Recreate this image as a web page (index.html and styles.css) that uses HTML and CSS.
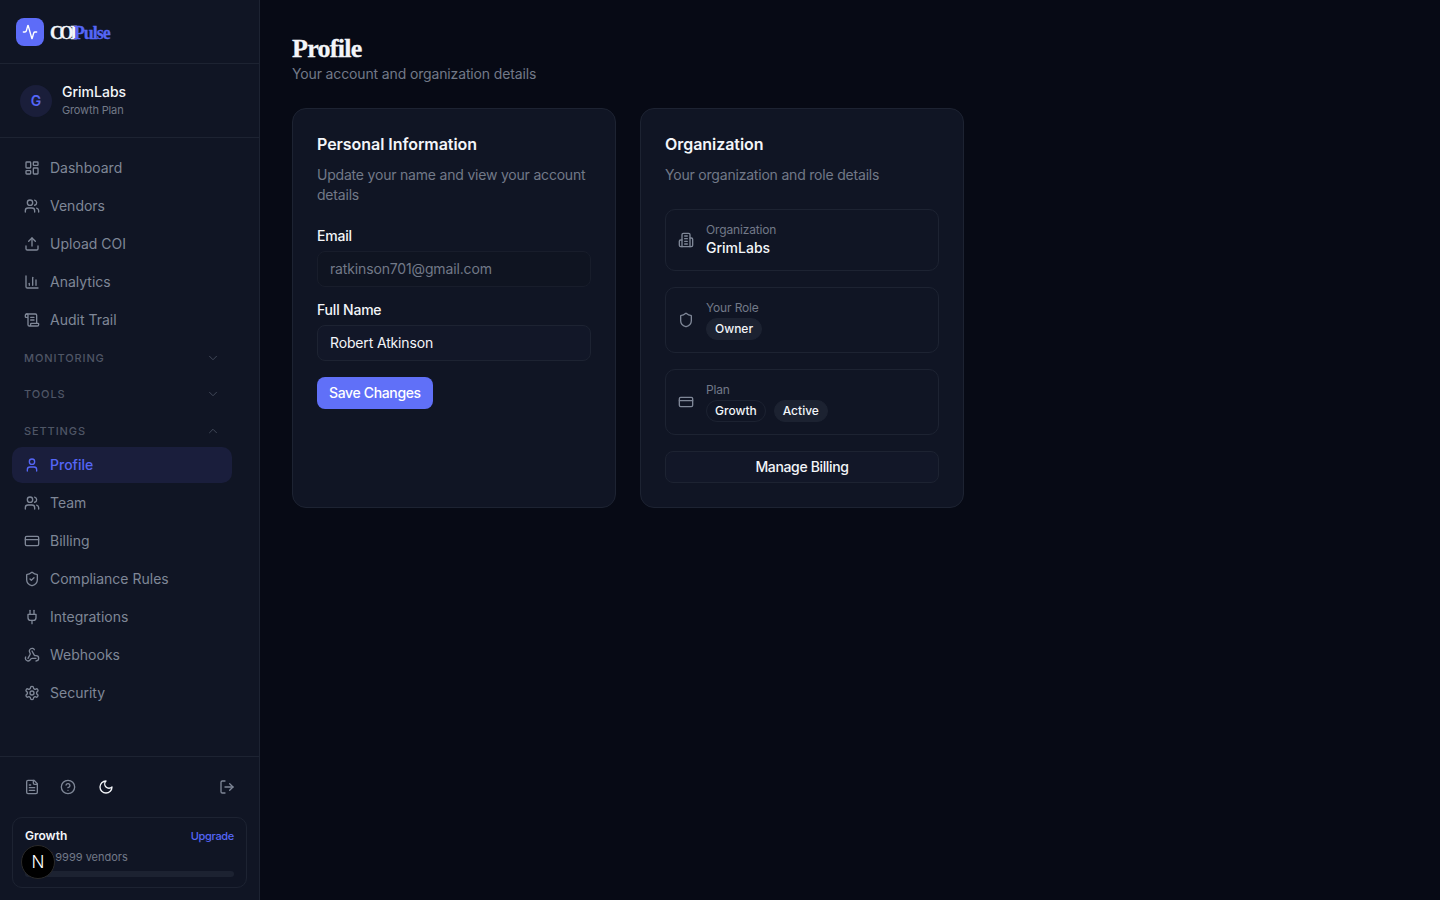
FILE: index.html
```html
<!DOCTYPE html>
<html lang="en">
<head>
    <meta charset="UTF-8">
    <meta name="viewport" content="width=device-width, initial-scale=1.0">
    <title>Profile - COIPulse</title>
    <link rel="stylesheet" href="styles.css">
</head>
<body>
    <svg class="sprite" width="0" height="0">
        <symbol id="i-users" viewBox="0 0 24 24"><path d="M16 21v-2a4 4 0 0 0-4-4H6a4 4 0 0 0-4 4v2"/><circle cx="9" cy="7" r="4"/><path d="M22 21v-2a4 4 0 0 0-3-3.87"/><path d="M16 3.13a4 4 0 0 1 0 7.75"/></symbol>
        <symbol id="i-card" viewBox="0 0 24 24"><rect x="2" y="5" width="20" height="14" rx="2"/><line x1="2" y1="10" x2="22" y2="10"/></symbol>
        <symbol id="i-down" viewBox="0 0 24 24"><path d="m6 9 6 6 6-6"/></symbol>
    </svg>

    <div class="app">
        <aside class="sidebar">
            <div class="logo-row">
                <div class="logo-mark">
                    <svg class="icon" viewBox="0 0 24 24"><path d="M22 12h-2.48a2 2 0 0 0-1.93 1.46l-2.35 8.36a.25.25 0 0 1-.48 0L9.24 2.18a.25.25 0 0 0-.48 0l-2.35 8.36A2 2 0 0 1 4.49 12H2"/></svg>
                </div>
                <span class="logo-text"><span class="logo-coi">COI</span><span class="accent">Pulse</span></span>
            </div>

            <div class="org-row">
                <div class="avatar">G</div>
                <div class="org-text">
                    <div class="org-name">GrimLabs</div>
                    <div class="org-plan">Growth Plan</div>
                </div>
            </div>

            <nav class="nav">
                <a class="nav-item"><svg class="icon" viewBox="0 0 24 24"><rect x="3" y="3" width="7" height="9" rx="1"/><rect x="14" y="3" width="7" height="5" rx="1"/><rect x="14" y="12" width="7" height="9" rx="1"/><rect x="3" y="16" width="7" height="5" rx="1"/></svg><span>Dashboard</span></a>
                <a class="nav-item"><svg class="icon"><use href="#i-users"/></svg><span>Vendors</span></a>
                <a class="nav-item"><svg class="icon" viewBox="0 0 24 24"><path d="M21 15v4a2 2 0 0 1-2 2H5a2 2 0 0 1-2-2v-4"/><polyline points="17 8 12 3 7 8"/><line x1="12" y1="3" x2="12" y2="15"/></svg><span>Upload COI</span></a>
                <a class="nav-item"><svg class="icon" viewBox="0 0 24 24"><path d="M3 3v16a2 2 0 0 0 2 2h16"/><path d="M18 17V9"/><path d="M13 17V5"/><path d="M8 17v-3"/></svg><span>Analytics</span></a>
                <a class="nav-item"><svg class="icon" viewBox="0 0 24 24"><path d="M15 12h-5"/><path d="M15 8h-5"/><path d="M19 17V5a2 2 0 0 0-2-2H4"/><path d="M8 21h12a2 2 0 0 0 2-2v-1a1 1 0 0 0-1-1H11a1 1 0 0 0-1 1v1a2 2 0 1 1-4 0V5a2 2 0 1 0-4 0v2a1 1 0 0 0 1 1h3"/></svg><span>Audit Trail</span></a>

                <div class="nav-section">MONITORING<svg class="chev"><use href="#i-down"/></svg></div>
                <div class="nav-section">TOOLS<svg class="chev"><use href="#i-down"/></svg></div>
                <div class="nav-section open">SETTINGS<svg class="chev flip"><use href="#i-down"/></svg></div>

                <a class="nav-item active"><svg class="icon" viewBox="0 0 24 24"><path d="M19 21v-2a4 4 0 0 0-4-4H9a4 4 0 0 0-4 4v2"/><circle cx="12" cy="7" r="4"/></svg><span>Profile</span></a>
                <a class="nav-item"><svg class="icon"><use href="#i-users"/></svg><span>Team</span></a>
                <a class="nav-item"><svg class="icon"><use href="#i-card"/></svg><span>Billing</span></a>
                <a class="nav-item"><svg class="icon" viewBox="0 0 24 24"><path d="M20 13c0 5-3.5 7.5-7.66 8.95a1 1 0 0 1-.67-.01C7.5 20.5 4 18 4 13V6a1 1 0 0 1 1-1c2 0 4.5-1.2 6.24-2.72a1.17 1.17 0 0 1 1.52 0C14.51 3.81 17 5 19 5a1 1 0 0 1 1 1z"/><path d="m9 12 2 2 4-4"/></svg><span>Compliance Rules</span></a>
                <a class="nav-item"><svg class="icon" viewBox="0 0 24 24"><path d="M12 22v-5"/><path d="M9 8V2"/><path d="M15 8V2"/><path d="M18 8v5a4 4 0 0 1-4 4h-4a4 4 0 0 1-4-4V8Z"/></svg><span>Integrations</span></a>
                <a class="nav-item"><svg class="icon" viewBox="0 0 24 24"><path d="M18 16.98h-5.99c-1.1 0-1.95.94-2.48 1.9A4 4 0 0 1 2 17c.01-.7.2-1.4.57-2"/><path d="m6 17 3.13-5.78c.53-.97.1-2.18-.5-3.1a4 4 0 1 1 6.89-4.06"/><path d="m12 6 3.13 5.73C15.66 12.7 16.9 13 18 13a4 4 0 0 1 0 8"/></svg><span>Webhooks</span></a>
                <a class="nav-item"><svg class="icon" viewBox="0 0 24 24"><path d="M12.22 2h-.44a2 2 0 0 0-2 2v.18a2 2 0 0 1-1 1.73l-.43.25a2 2 0 0 1-2 0l-.15-.08a2 2 0 0 0-2.73.73l-.22.38a2 2 0 0 0 .73 2.73l.15.1a2 2 0 0 1 1 1.72v.51a2 2 0 0 1-1 1.74l-.15.09a2 2 0 0 0-.73 2.73l.22.38a2 2 0 0 0 2.73.73l.15-.08a2 2 0 0 1 2 0l.43.25a2 2 0 0 1 1 1.73V20a2 2 0 0 0 2 2h.44a2 2 0 0 0 2-2v-.18a2 2 0 0 1 1-1.73l.43-.25a2 2 0 0 1 2 0l.15.08a2 2 0 0 0 2.73-.73l.22-.39a2 2 0 0 0-.73-2.73l-.15-.08a2 2 0 0 1-1-1.74v-.5a2 2 0 0 1 1-1.74l.15-.09a2 2 0 0 0 .73-2.73l-.22-.38a2 2 0 0 0-2.73-.73l-.15.08a2 2 0 0 1-2 0l-.43-.25a2 2 0 0 1-1-1.73V4a2 2 0 0 0-2-2z"/><circle cx="12" cy="12" r="3"/></svg><span>Security</span></a>
            </nav>

            <div class="side-foot">
                <div class="foot-icons">
                    <svg class="icon" viewBox="0 0 24 24"><path d="M15 2H6a2 2 0 0 0-2 2v16a2 2 0 0 0 2 2h12a2 2 0 0 0 2-2V7Z"/><path d="M14 2v4a2 2 0 0 0 2 2h4"/><path d="M10 9H8"/><path d="M16 13H8"/><path d="M16 17H8"/></svg>
                    <svg class="icon" viewBox="0 0 24 24"><circle cx="12" cy="12" r="10"/><path d="M9.09 9a3 3 0 0 1 5.83 1c0 2-3 3-3 3"/><path d="M12 17h.01"/></svg>
                    <svg class="icon moon" viewBox="0 0 24 24"><path d="M12 3a6 6 0 0 0 9 9 9 9 0 1 1-9-9Z"/></svg>
                    <svg class="icon logout" viewBox="0 0 24 24"><path d="M9 21H5a2 2 0 0 1-2-2V5a2 2 0 0 1 2-2h4"/><polyline points="16 17 21 12 16 7"/><line x1="21" y1="12" x2="9" y2="12"/></svg>
                </div>
                <div class="plan-card">
                    <div class="plan-top"><span class="plan-name">Growth</span><span class="plan-up">Upgrade</span></div>
                    <div class="plan-count">10 of 9999 vendors</div>
                    <div class="plan-bar"></div>
                </div>
            </div>
        </aside>

        <main class="main">
            <h1>Profile</h1>
            <p class="sub">Your account and organization details</p>

            <div class="cards">
                <section class="card">
                    <h2>Personal Information</h2>
                    <p class="card-desc">Update your name and view your account details</p>
                    <div class="form-group">
                        <label for="email">Email</label>
                        <input type="text" id="email" value="ratkinson701@gmail.com" disabled>
                    </div>
                    <div class="form-group">
                        <label for="fullname">Full Name</label>
                        <input type="text" id="fullname" value="Robert Atkinson">
                    </div>
                    <button class="btn-primary">Save Changes</button>
                </section>

                <section class="card">
                    <h2>Organization</h2>
                    <p class="card-desc">Your organization and role details</p>
                    <div class="info-list">
                        <div class="info-row">
                            <svg class="icon" viewBox="0 0 24 24"><path d="M6 22V4a2 2 0 0 1 2-2h8a2 2 0 0 1 2 2v18Z"/><path d="M6 12H4a2 2 0 0 0-2 2v6a2 2 0 0 0 2 2h2"/><path d="M18 9h2a2 2 0 0 1 2 2v9a2 2 0 0 1-2 2h-2"/><path d="M10 6h4"/><path d="M10 10h4"/><path d="M10 14h4"/><path d="M10 18h4"/></svg>
                            <div>
                                <div class="info-label">Organization</div>
                                <div class="info-value">GrimLabs</div>
                            </div>
                        </div>
                        <div class="info-row">
                            <svg class="icon" viewBox="0 0 24 24"><path d="M20 13c0 5-3.5 7.5-7.66 8.95a1 1 0 0 1-.67-.01C7.5 20.5 4 18 4 13V6a1 1 0 0 1 1-1c2 0 4.5-1.2 6.24-2.72a1.17 1.17 0 0 1 1.52 0C14.51 3.81 17 5 19 5a1 1 0 0 1 1 1z"/></svg>
                            <div>
                                <div class="info-label">Your Role</div>
                                <div class="badges"><span class="badge">Owner</span></div>
                            </div>
                        </div>
                        <div class="info-row">
                            <svg class="icon"><use href="#i-card"/></svg>
                            <div>
                                <div class="info-label">Plan</div>
                                <div class="badges"><span class="badge outline">Growth</span><span class="badge">Active</span></div>
                            </div>
                        </div>
                        <button class="btn-outline">Manage Billing</button>
                    </div>
                </section>
            </div>
        </main>
    </div>

    <div class="dev-badge">N</div>
</body>
</html>
```

FILE: styles.css
```css
* {
    box-sizing: border-box;
}
body {
    margin: 0;
    font-family: Inter, "Noto Sans", sans-serif;
    font-size: 14px;
    background-color: #070a15;
    color: #f3f5f9;
}
.sprite {
    position: absolute;
}
.app {
    display: flex;
    height: 900px;
}
.icon {
    width: 16px;
    height: 16px;
    flex: none;
    fill: none;
    stroke: currentColor;
    stroke-width: 2;
    stroke-linecap: round;
    stroke-linejoin: round;
}

/* sidebar */
.sidebar {
    width: 260px;
    flex: none;
    display: flex;
    flex-direction: column;
    background-color: #101524;
    border-right: 1px solid #1d2332;
}
.logo-row {
    height: 64px;
    display: flex;
    align-items: center;
    gap: 6px;
    padding-left: 16px;
    border-bottom: 1px solid #1d2332;
}
.logo-mark {
    width: 28px;
    height: 28px;
    border-radius: 8px;
    display: flex;
    align-items: center;
    justify-content: center;
    background-color: #5d6cf8;
    color: #fff;
}
.logo-text {
    font-family: "Liberation Serif", serif;
    font-size: 18px;
    font-weight: 700;
    letter-spacing: -1px;
    color: #f3f5f9;
    padding-top: 3px;
    -webkit-text-stroke: 0.3px currentColor;
}
.logo-coi {
    letter-spacing: -3.4px;
}
.accent {
    color: #5566f6;
}
.org-row {
    height: 74px;
    display: flex;
    align-items: center;
    gap: 10px;
    padding-left: 20px;
    border-bottom: 1px solid #1d2332;
}
.org-text {
    padding-bottom: 2px;
}
.avatar {
    width: 32px;
    height: 32px;
    border-radius: 50%;
    display: flex;
    align-items: center;
    justify-content: center;
    background-color: #1a1e3a;
    color: #5566f6;
    font-weight: 600;
}
.org-name {
    font-weight: 500;
    line-height: 20px;
}
.org-plan {
    font-size: 11px;
    line-height: 16px;
    letter-spacing: -0.15px;
    color: #727988;
}
.nav {
    flex: 1;
    padding: 12px 27px 0 12px;
}
.nav-item {
    height: 36px;
    margin-bottom: 2px;
    display: flex;
    align-items: center;
    gap: 10px;
    padding-left: 12px;
    border-radius: 10px;
    color: #7f8797;
}
.nav-item span {
    padding-bottom: 2px;
}
.nav-item.active {
    background-color: #1a1e3c;
    color: #5566f6;
    font-weight: 500;
}
.nav-section {
    height: 36px;
    display: flex;
    align-items: center;
    justify-content: space-between;
    padding: 0 12px;
    font-size: 11px;
    font-weight: 500;
    letter-spacing: 0.9px;
    color: #4f5666;
}
.nav-section.open {
    height: 32px;
    margin-top: 3px;
}
.chev {
    width: 14px;
    height: 14px;
    fill: none;
    stroke: #444b5b;
    stroke-width: 1.6;
    stroke-linecap: round;
    stroke-linejoin: round;
}
.flip {
    transform: rotate(180deg);
}
.side-foot {
    border-top: 1px solid #1d2332;
    padding: 0 12px 12px;
}
.foot-icons {
    height: 60px;
    display: flex;
    align-items: center;
    gap: 20px;
    padding: 0 12px;
    color: #7f8797;
}
.moon {
    color: #f3f5f9;
    margin-left: 2px;
}
.logout {
    margin-left: auto;
}
.plan-card {
    height: 71px;
    padding: 10px 12px 0;
    border: 1px solid #1d2332;
    border-radius: 10px;
}
.plan-top {
    display: flex;
    justify-content: space-between;
    align-items: center;
    font-size: 12px;
    line-height: 16px;
}
.plan-name {
    font-weight: 600;
}
.plan-up {
    color: #5566f6;
    font-size: 11px;
    font-weight: 500;
    letter-spacing: -0.3px;
}
.plan-count {
    margin: 5px 0 0 2px;
    font-size: 11px;
    line-height: 16px;
    color: #727988;
}
.plan-bar {
    height: 6px;
    margin-top: 6px;
    border-radius: 3px;
    background-color: #1c2231;
}

/* next.js dev indicator, sits over the sidebar */
.dev-badge {
    position: fixed;
    left: 21px;
    bottom: 21px;
    width: 34px;
    height: 34px;
    border-radius: 50%;
    display: flex;
    align-items: center;
    justify-content: center;
    background-color: #000;
    border: 1px solid #2a2a2a;
    color: #fff;
    font-size: 17px;
    font-weight: 300;
}

/* main */
.main {
    flex: 1;
    padding: 32px;
}
h1 {
    margin: 0;
    padding-top: 2px;
    font-family: "Liberation Serif", serif;
    font-size: 26px;
    line-height: 30px;
    font-weight: 700;
    letter-spacing: -0.7px;
    -webkit-text-stroke: 0.3px currentColor;
}
.sub {
    margin: 0 0 24px;
    line-height: 20px;
    letter-spacing: -0.14px;
    color: #727988;
}
.cards {
    display: grid;
    grid-template-columns: 324px 324px;
    gap: 24px;
}
.card {
    height: 400px;
    padding: 24px;
    background-color: #101524;
    border: 1px solid #1d2332;
    border-radius: 14px;
}
h2 {
    margin: 0;
    font-size: 16px;
    line-height: 22px;
    font-weight: 600;
    letter-spacing: -0.05px;
}
.card-desc {
    margin: 10px 0 0;
    line-height: 20px;
    letter-spacing: -0.2px;
    color: #727988;
}
.form-group {
    margin-top: 23px;
}
.form-group + .form-group {
    margin-top: 15px;
}
label {
    display: block;
    margin-bottom: 7px;
    line-height: 16px;
    font-weight: 500;
    letter-spacing: -0.2px;
}
input {
    display: block;
    width: 100%;
    height: 36px;
    padding: 0 12px 2px;
    border: 1px solid #1d2332;
    border-radius: 8px;
    background-color: #121728;
    color: #f3f5f9;
    font: inherit;
    letter-spacing: -0.15px;
}
input:disabled {
    color: #727988;
    background-color: #0f1421;
    border-color: #181d2b;
}
.btn-primary {
    display: block;
    margin-top: 16px;
    height: 32px;
    padding: 0 12px 2px;
    border: none;
    border-radius: 8px;
    background-color: #6070f8;
    color: #fff;
    font: inherit;
    font-weight: 500;
    letter-spacing: -0.35px;
}
.info-list {
    display: flex;
    flex-direction: column;
    gap: 16px;
    margin-top: 24px;
}
.info-row {
    display: flex;
    align-items: center;
    gap: 12px;
    padding: 12px;
    border: 1px solid #1d2332;
    border-radius: 10px;
    color: #7f8797;
}
.info-label {
    font-size: 12px;
    line-height: 16px;
    letter-spacing: -0.15px;
    color: #727988;
}
.info-value {
    line-height: 20px;
    font-weight: 500;
    color: #f3f5f9;
}
.badges {
    display: flex;
    gap: 8px;
    margin-top: 2px;
}
.badge {
    height: 22px;
    display: flex;
    align-items: center;
    padding: 0 8px 2px;
    border: 1px solid #1c2231;
    border-radius: 11px;
    background-color: #1c2231;
    color: #f3f5f9;
    font-size: 12px;
    font-weight: 500;
}
.badge.outline {
    background: transparent;
}
.btn-outline {
    height: 32px;
    padding-bottom: 2px;
    border: 1px solid #1d2332;
    border-radius: 8px;
    background-color: #121728;
    color: #f3f5f9;
    font: inherit;
    font-weight: 500;
    letter-spacing: -0.35px;
}
```
